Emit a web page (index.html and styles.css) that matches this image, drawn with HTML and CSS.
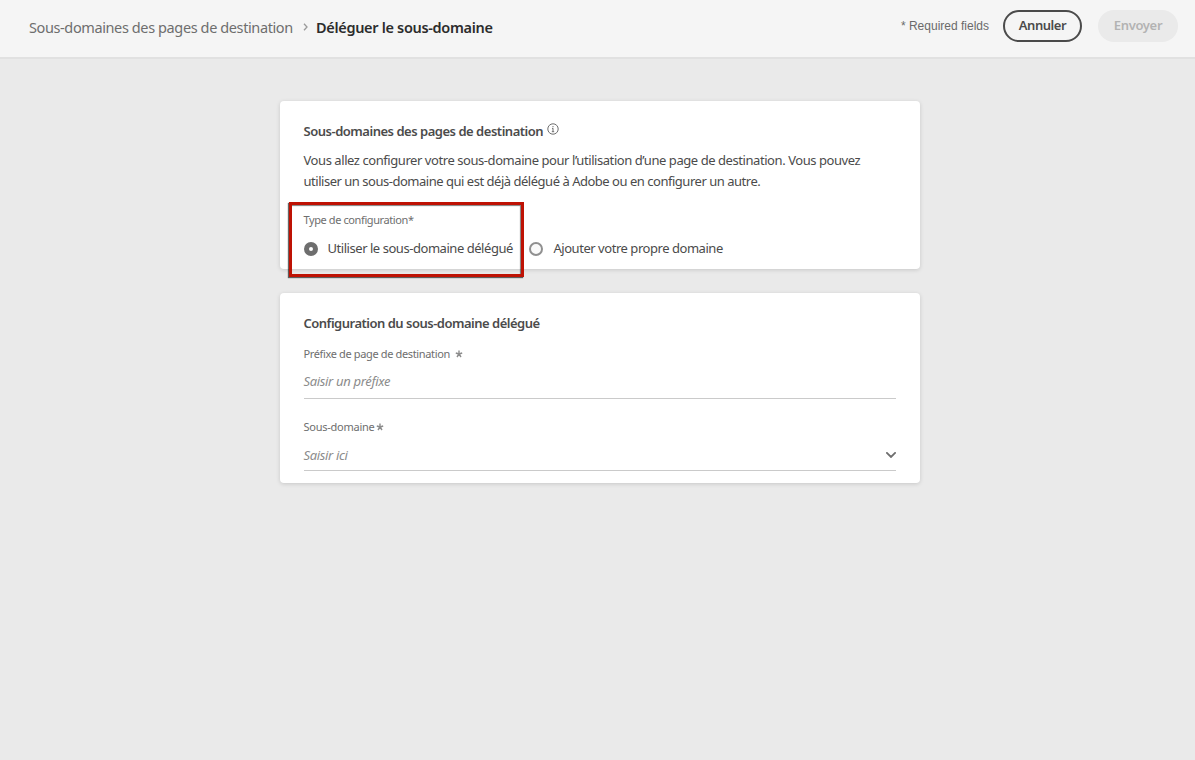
FILE: index.html
```
<!DOCTYPE html>
<html lang="fr">
<head>
<meta charset="utf-8">
<title>Déléguer le sous-domaine</title>
<link rel="stylesheet" href="styles.css">
</head>
<body>
<header class="topbar">
  <nav class="crumbs">
    <a class="crumb">Sous-domaines des pages de destination</a>
    <svg class="crumb-sep" viewBox="0 0 5 8"><path d="M1 .8l3 3.2-3 3.2"/></svg>
    <span class="crumb-current">Déléguer le sous-domaine</span>
  </nav>
  <div class="actions">
    <span class="required">* Required fields</span>
    <button class="btn btn-outline">Annuler</button>
    <button class="btn btn-disabled" disabled>Envoyer</button>
  </div>
</header>
<main class="content">
  <section class="card card-type">
    <h2 class="card-title">Sous-domaines des pages de destination
      <svg class="info" viewBox="0 0 12 12"><circle cx="6" cy="6" r="5.2"/><path d="M6 5.2v3.6M6 3v1.2M5 5.4h1M4.8 8.7h2.4"/></svg>
    </h2>
    <p class="intro">Vous allez configurer votre sous-domaine pour l’utilisation d’une page de destination. Vous pouvez<br><span class="intro-end">utiliser un sous-domaine qui est déjà délégué à Adobe ou en configurer un autre.</span></p>
    <div class="choice">
      <div class="label">Type de configuration*</div>
      <div class="options">
        <label class="option"><span class="radio radio-on"></span>Utiliser le sous-domaine délégué</label>
        <label class="option"><span class="radio"></span>Ajouter votre propre domaine</label>
      </div>
      <span class="highlight"></span>
    </div>
  </section>
  <section class="card card-config">
    <h2 class="card-title">Configuration du sous-domaine délégué</h2>
    <div class="label label-prefix">Préfixe de page de destination
      <svg class="star" viewBox="0 0 8 8"><path d="M4 4V.6M4 4L.8 3M4 4l3.2-1M4 4L2 7M4 4l2 3"/></svg>
    </div>
    <div class="field field-prefix">Saisir un préfixe</div>
    <div class="label label-sub">Sous-domaine
      <svg class="star" viewBox="0 0 8 8"><path d="M4 4V.6M4 4L.8 3M4 4l3.2-1M4 4L2 7M4 4l2 3"/></svg>
    </div>
    <div class="field field-sub">Saisir ici
      <svg class="chevron" viewBox="0 0 10 6"><path d="M.9 .9L5 5 9.100 .9"/></svg>
    </div>
  </section>
</main>
</body>
</html>
```
FILE: styles.css
```
* { box-sizing: border-box; }

body {
  min-height: 100vh;
  margin: 0;
  background: #eaeaea;
  color: #4b4b4b;
  font: 13px/20px "Noto Sans", sans-serif;
  letter-spacing: -0.47px;
  white-space: nowrap;
}

svg { display: block; flex: none; fill: none; stroke: #6e6e6e; }

.topbar {
  display: flex;
  justify-content: space-between;
  align-items: flex-start;
  height: 59px;
  padding: 10px 17px 0 29px;
  background: #f5f5f5;
  border-bottom: 2px solid #e1e1e1;
}

.crumbs {
  display: flex;
  align-items: center;
  padding-top: 7px;
  font-size: 14.5px;
  letter-spacing: -0.39px;
}
.crumb { width: 274px; color: #6e6e6e; }
.crumb-sep { width: 5px; height: 8px; margin-right: 8px; stroke: #9a9a9a; stroke-width: 1.3; }
.crumb-current { color: #2c2c2c; font-weight: 600; letter-spacing: -0.32px; }

.actions { display: flex; align-items: center; }
.required {
  margin-right: 14px;
  color: #6a6a6a;
  font: 12px/16px "Liberation Sans", Arial, sans-serif;
  letter-spacing: 0;
}
.btn {
  height: 32px;
  padding: 0 0 3px;
  border: 0;
  border-radius: 16px;
  font: 600 13px/20px "Noto Sans", sans-serif;
}
.btn-outline {
  width: 79px;
  margin-right: 16px;
  border: 2px solid #4b4b4b;
  background: transparent;
  color: #4b4b4b;
  letter-spacing: -0.45px;
}
.btn-disabled {
  width: 80px;
  background: #eaeaea;
  color: #b3b3b3;
  letter-spacing: -0.35px;
}

.content {
  display: flex;
  flex-direction: column;
  gap: 24px;
  width: 640px;
  margin: 42px 0 0 280px;
}
.card {
  padding: 20px 24px 0 23.5px;
  border-radius: 4px;
  background: #fff;
  box-shadow: 0 1px 4px rgba(0, 0, 0, .15);
}
.card-type { height: 168px; }
.card-config { height: 190px; }
.card-title {
  display: flex;
  margin: 0;
  font-size: 13px;
  font-weight: 600;
  letter-spacing: -0.48px;
}
.card-config .card-title { letter-spacing: -0.5px; }
.info { width: 12px; height: 12px; margin: 2px 0 0 4px; }
.intro { margin: 9px 0 20px; line-height: 21px; letter-spacing: -0.435px; }
.intro-end { letter-spacing: -0.48px; }

.label {
  display: flex;
  color: #6e6e6e;
  font-size: 11px;
  line-height: 16px;
  letter-spacing: -0.4px;
}
.choice { position: relative; }
.options { display: flex; gap: 16.5px; margin-top: 10px; }
.option { display: flex; align-items: center; letter-spacing: -0.455px; }
.radio {
  width: 14px;
  height: 14px;
  margin: 1px 10px 0 0;
  border: 2px solid #909090;
  border-radius: 50%;
  background: #fafafa;
}
.radio-on { border: 5px solid #6e6e6e; background: #fff; }
.highlight {
  position: absolute;
  top: -10px;
  left: -14.5px;
  width: 235px;
  height: 75px;
  border: 3px solid #be1204;
  box-shadow: -1px 1px 1px rgba(0, 0, 0, .6), inset -1px 1px 1px rgba(0, 0, 0, .5);
}

.label-prefix { margin-top: 13px; letter-spacing: -0.36px; }
.label-prefix .star { margin-left: 5.5px; }
.label-sub { margin-top: 20px; letter-spacing: -0.25px; }
.label-sub .star { margin-left: 1.5px; }
.star { width: 8px; height: 8px; margin-top: 4px; stroke: #8c8c8c; stroke-width: 1.4; }
.label .star { margin-top: 3.5px; }
.field {
  display: flex;
  justify-content: space-between;
  border-bottom: 1px solid #cacaca;
  color: #8c8c8c;
  font-style: italic;
  letter-spacing: -0.33px;
}
.field-prefix { height: 28px; margin-top: 9px; }
.field-sub { height: 26px; margin-top: 10px; }
.chevron { width: 10px; height: 6px; margin-top: 7px; stroke-width: 1.8; stroke-linecap: round; }
```
